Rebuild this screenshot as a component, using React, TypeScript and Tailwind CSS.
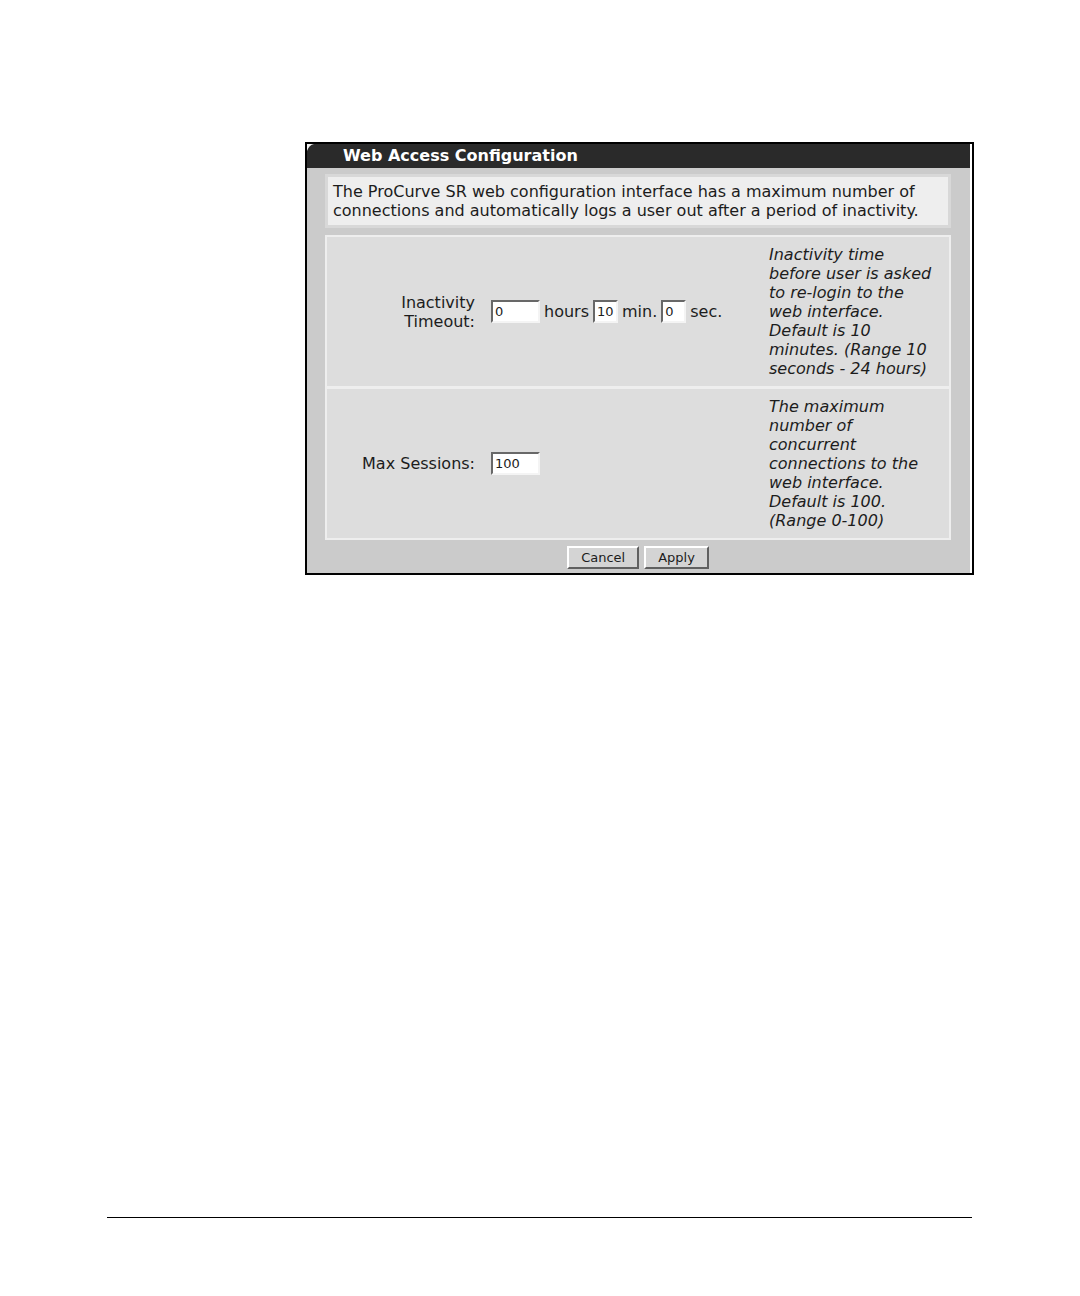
import { FC, ReactNode, useState } from "react";

interface WebAccessSettings {
    hours: string;
    minutes: string;
    seconds: string;
    maxSessions: string;
}

const defaultSettings: WebAccessSettings = {
    hours: "0",
    minutes: "10",
    seconds: "0",
    maxSessions: "100",
};

interface NumberFieldProps {
    id: string;
    value: string;
    wide?: boolean;
    onChange: (value: string) => void;
}

const NumberField: FC<NumberFieldProps> = ({ id, value, wide, onChange }) => (
    <input
        id={id}
        type="text"
        value={value}
        onChange={(e) => onChange(e.target.value)}
        className={`h-[23px] border-2 border-t-[#686868] border-l-[#686868] border-r-[#f4f4f4] border-b-[#f4f4f4] bg-white pl-[2px] text-[13px] outline-none ${
            wide ? "w-[49px]" : "w-[25px]"
        }`}
    />
);

interface SettingRowProps {
    label: string;
    htmlFor: string;
    help: string;
    children: ReactNode;
}

const SettingRow: FC<SettingRowProps> = ({ label, htmlFor, help, children }) => (
    <div className="grid grid-cols-[148px_1fr_180px] items-center py-2">
        <label htmlFor={htmlFor} className="pl-7 text-right">{label}</label>
        <div className="flex items-center gap-1 pl-4">{children}</div>
        <p className="pr-3 italic">{help}</p>
    </div>
);

const PushButton: FC<{ type: "button" | "submit"; onClick?: () => void; children: ReactNode }> = ({ type, onClick, children }) => (
    <button
        type={type}
        onClick={onClick}
        className="h-[23px] border-2 border-t-white border-l-white border-r-[#606060] border-b-[#606060] bg-[#d4d4d4] px-3 text-[13px] leading-[19px]"
    >
        {children}
    </button>
);

export default function App() {
    const [settings, setSettings] = useState<WebAccessSettings>(defaultSettings);

    const update = (key: keyof WebAccessSettings) => (value: string) => {
        setSettings((prev) => ({ ...prev, [key]: value }));
    };

    return (
        <div className="flex min-h-screen flex-col bg-white pt-[142px] pr-[106px] pb-[78px] pl-[107px] font-['DejaVu_Sans',Verdana,sans-serif] text-[16px] leading-[19px] text-[#1c1c1c]">
            <main className="ml-[198px] border-2 border-black bg-white pr-[2px]">
                <div className="bg-[#cbcbcb]">
                    {/* Title bar with its clipped corner */}
                    <header className="relative bg-[#2a2a2a] pl-9">
                        <svg className="absolute top-0 left-0" width="7" height="7" viewBox="0 0 7 7" aria-hidden="true">
                            <path d="M0 0H7Q2 1 0 7Z" fill="#f4f4f4" />
                        </svg>
                        <h1 className="leading-[24px] font-bold text-white">Web Access Configuration</h1>
                    </header>

                    <form
                        onSubmit={(e) => e.preventDefault()}
                        className="pt-[6px] pr-[19px] pb-1 pl-[18px]"
                    >
                        <p className="border-[3px] border-[#d8d8d8] bg-[#eeeeee] px-[5px] py-[5px]">
                            The ProCurve SR web configuration interface has a maximum number of
                            connections and automatically logs a user out after a period of inactivity.
                        </p>

                        <div className="mt-[7px] divide-y-3 divide-[#eeeeee] border-2 border-[#eeeeee] bg-[#dddddd]">
                            <SettingRow
                                label="Inactivity Timeout:"
                                htmlFor="hours"
                                help="Inactivity time before user is asked to re-login to the web interface. Default is 10 minutes. (Range 10 seconds - 24 hours)"
                            >
                                <NumberField id="hours" wide value={settings.hours} onChange={update("hours")} />
                                <label htmlFor="hours">hours</label>
                                <NumberField id="minutes" value={settings.minutes} onChange={update("minutes")} />
                                <label htmlFor="minutes">min.</label>
                                <NumberField id="seconds" value={settings.seconds} onChange={update("seconds")} />
                                <label htmlFor="seconds">sec.</label>
                            </SettingRow>
                            <SettingRow
                                label="Max Sessions:"
                                htmlFor="max-sessions"
                                help="The maximum number of concurrent connections to the web interface. Default is 100. (Range 0-100)"
                            >
                                <NumberField id="max-sessions" wide value={settings.maxSessions} onChange={update("maxSessions")} />
                            </SettingRow>
                        </div>

                        <div className="mt-[6px] flex justify-center gap-[5px]">
                            <PushButton type="button" onClick={() => setSettings(defaultSettings)}>Cancel</PushButton>
                            <PushButton type="submit">Apply</PushButton>
                        </div>
                    </form>
                </div>
            </main>

            <hr className="mt-auto mr-[2px] border-t border-black" />
        </div>
    );
}
